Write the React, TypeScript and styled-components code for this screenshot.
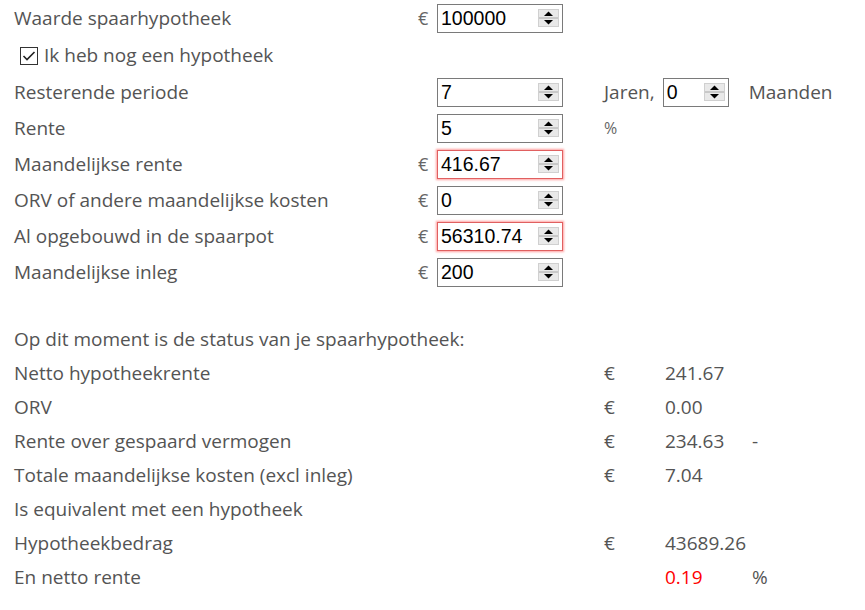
import React from "react";
import styled, { createGlobalStyle, css } from "styled-components";

const Global = createGlobalStyle`
  html, body { margin: 0; padding: 0; background: #ffffff; }
  body { font-family: "Open Sans", "Noto Sans", sans-serif; color: #545454; }
`;

const Page = styled.div`
  padding: 0 0 0 14px;
  width: 851px;
`;

const FormRow = styled.div<{ $h?: number }>`
  display: grid;
  grid-template-columns: 401px 22px 130px 1fr;
  align-items: center;
  height: ${(p) => p.$h ?? 36}px;
`;

const Label = styled.div`
  font-size: 19px;
  line-height: 24px;
  color: #545454;
  white-space: nowrap;
`;

const Euro = styled.div`
  font-size: 18px;
  color: #666666;
  padding-left: 3px;
`;

const NumberBox = styled.div<{ $w: number; $invalid?: boolean }>`
  box-sizing: border-box;
  width: ${(p) => p.$w}px;
  height: 29px;
  border: 1px solid #7a7a7a;
  background: #ffffff;
  display: flex;
  align-items: center;
  padding: 0 3px 0 3px;
  ${(p) =>
    p.$invalid &&
    css`
      border-color: #e06060;
      box-shadow: 0 0 2px 1px rgba(255, 80, 80, 0.55);
    `}
`;

const NumberInput = styled.input`
  flex: 1;
  min-width: 0;
  border: none;
  outline: none;
  padding: 0;
  margin: 0;
  background: transparent;
  font-family: "Liberation Sans", Arial, sans-serif;
  font-size: 19.5px;
  color: #000000;
`;

const SpinWrap = styled.span`
  display: flex;
  width: 21px;
  height: 18px;
  flex: none;
`;

const Unit = styled.div`
  display: flex;
  align-items: center;
  padding-left: 37px;
  font-size: 19px;
  color: #545454;
`;

const UnitSmall = styled.span`
  font-size: 16px;
  color: #666666;
`;

const Jaren = styled.span`
  margin-right: 8px;
`;

const Maanden = styled.span`
  margin-left: 20px;
`;

const CheckRow = styled.label`
  display: flex;
  align-items: center;
  height: 38px;
  padding-left: 6px;
  font-size: 19px;
  color: #545454;
  cursor: pointer;
`;

const CheckBox = styled.span`
  box-sizing: border-box;
  width: 18px;
  height: 18px;
  border: 1px solid #333333;
  background: #ffffff;
  display: flex;
  align-items: center;
  justify-content: center;
  margin-right: 6px;
  margin-top: 1px;
`;

const Results = styled.div`
  margin-top: 32px;
`;

const ResRow = styled.div`
  display: grid;
  grid-template-columns: 590px 61px 87px 1fr;
  align-items: center;
  height: 34px;
  font-size: 19px;
  line-height: 24px;
  color: #545454;
`;

const Value = styled.div<{ $red?: boolean }>`
  color: ${(p) => (p.$red ? "#ff0000" : "#545454")};
  white-space: nowrap;
`;

const Cell = styled.div`
  white-space: nowrap;
`;

const Spinner = () => (
  <SpinWrap>
    <svg width="21" height="18" viewBox="0 0 21 18">
      <rect x="0.5" y="0.5" width="20" height="17" fill="#e9e9e9" stroke="#d0d0d0" />
      <line x1="1" y1="9" x2="20" y2="9" stroke="#a8a8a8" strokeWidth="1" />
      <polygon points="6,7 15,7 10.5,2.5" fill="#000" />
      <polygon points="6,11 15,11 10.5,15.5" fill="#000" />
    </svg>
  </SpinWrap>
);

const Num = ({ value, w = 126, invalid }: { value: string; w?: number; invalid?: boolean }) => (
  <NumberBox $w={w} $invalid={invalid}>
    <NumberInput defaultValue={value} />
    <Spinner />
  </NumberBox>
);

type FieldProps = { label: string; euro?: boolean; value: string; invalid?: boolean; unit?: React.ReactNode };

const Field = ({ label, euro, value, invalid, unit }: FieldProps) => (
  <FormRow>
    <Label>{label}</Label>
    <Euro>{euro ? "€" : ""}</Euro>
    <Num value={value} invalid={invalid} />
    <Unit>{unit}</Unit>
  </FormRow>
);

const results: { label: string; euro?: boolean; value?: string; suffix?: string; red?: boolean }[] = [
  { label: "Op dit moment is de status van je spaarhypotheek:" },
  { label: "Netto hypotheekrente", euro: true, value: "241.67" },
  { label: "ORV", euro: true, value: "0.00" },
  { label: "Rente over gespaard vermogen", euro: true, value: "234.63", suffix: "-" },
  { label: "Totale maandelijkse kosten (excl inleg)", euro: true, value: "7.04" },
  { label: "Is equivalent met een hypotheek" },
  { label: "Hypotheekbedrag", euro: true, value: "43689.26" },
  { label: "En netto rente", value: "0.19", suffix: "%", red: true },
];

export default function App() {
  return (
    <Page>
      <Global />
      <Field label="Waarde spaarhypotheek" euro value="100000" />
      <CheckRow>
        <CheckBox>
          <svg width="14" height="12" viewBox="0 0 14 12">
            <polyline points="1.5,6 5,9.5 12.5,2" fill="none" stroke="#222" strokeWidth="1.6" />
          </svg>
        </CheckBox>
        Ik heb nog een hypotheek
      </CheckRow>
      <Field
        label="Resterende periode"
        value="7"
        unit={
          <>
            <Jaren>Jaren,</Jaren>
            <Num value="0" w={66} />
            <Maanden>Maanden</Maanden>
          </>
        }
      />
      <Field label="Rente" value="5" unit={<UnitSmall>%</UnitSmall>} />
      <Field label="Maandelijkse rente" euro value="416.67" invalid />
      <Field label="ORV of andere maandelijkse kosten" euro value="0" />
      <Field label="Al opgebouwd in de spaarpot" euro value="56310.74" invalid />
      <Field label="Maandelijkse inleg" euro value="200" />
      <Results>
        {results.map((r) => (
          <ResRow key={r.label}>
            <Cell>{r.label}</Cell>
            <Cell>{r.euro ? "€" : ""}</Cell>
            <Value $red={r.red}>{r.value ?? ""}</Value>
            <Cell>{r.suffix ?? ""}</Cell>
          </ResRow>
        ))}
      </Results>
    </Page>
  );
}
